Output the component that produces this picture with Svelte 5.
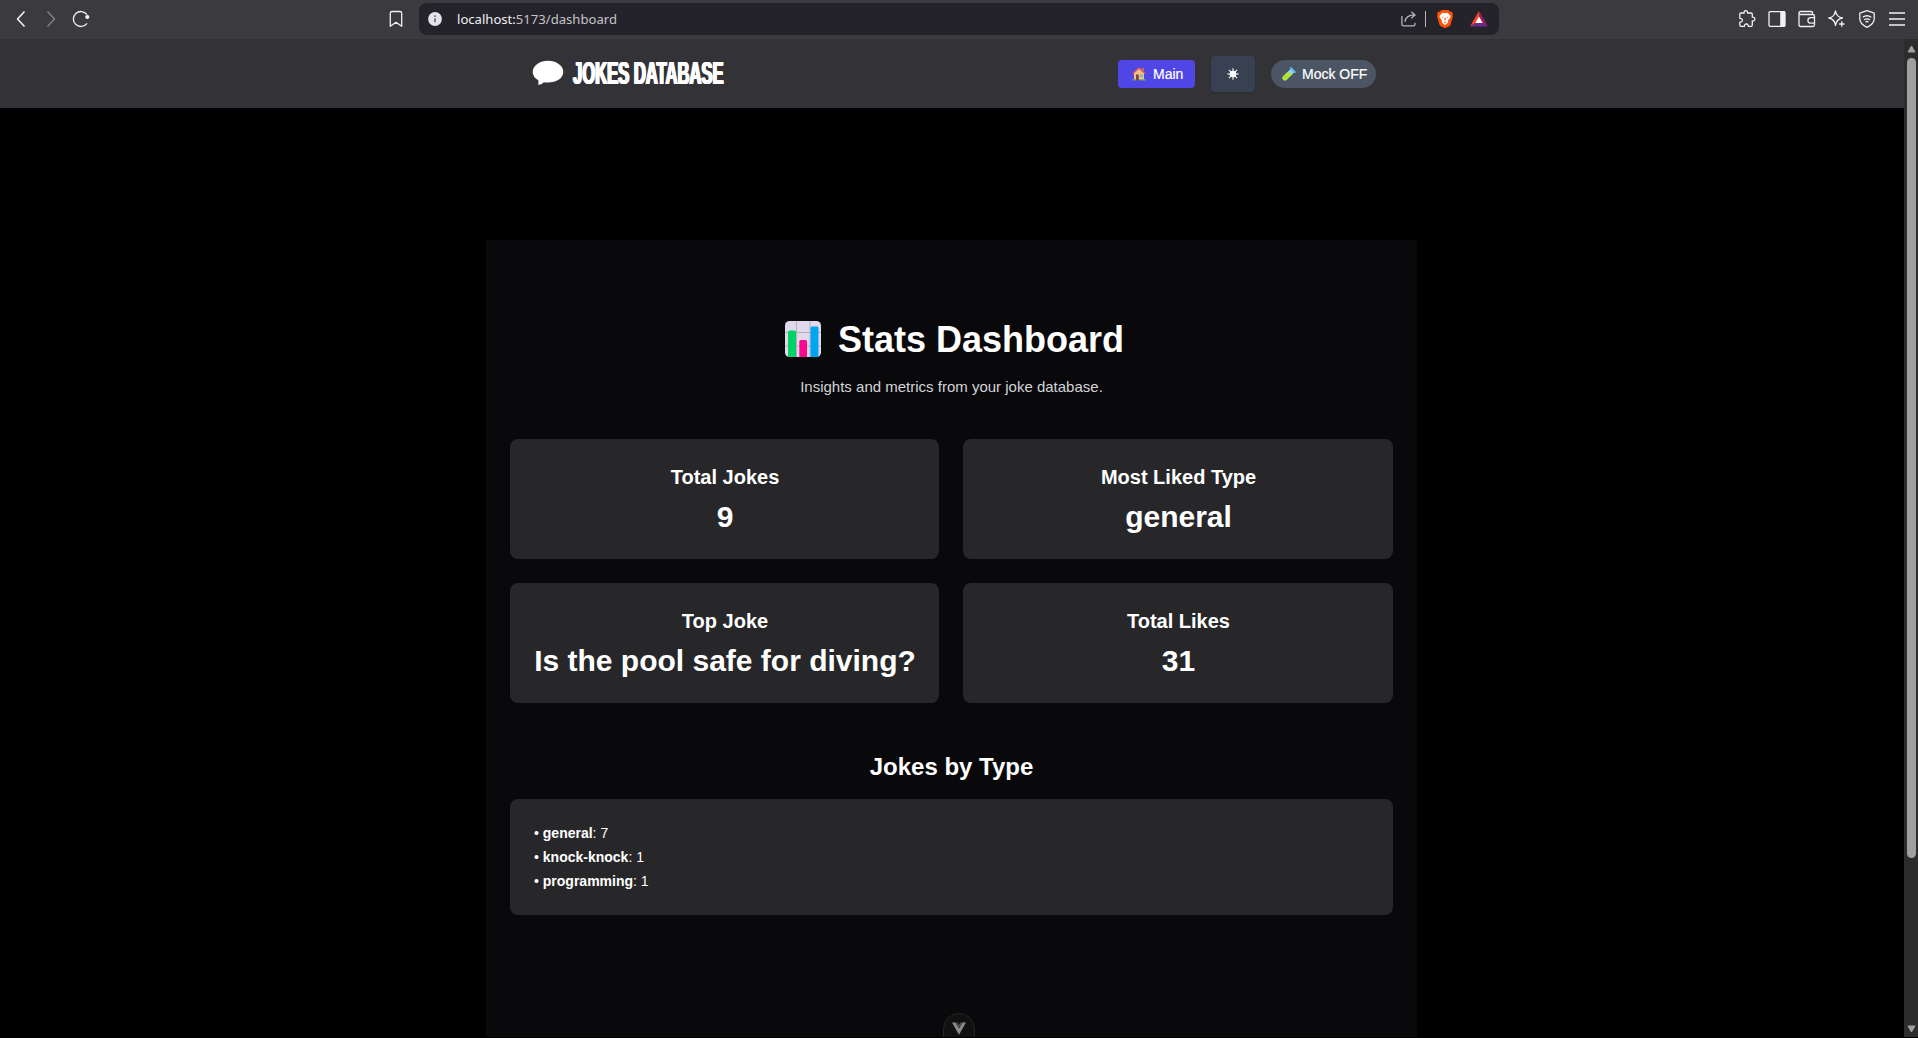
<script>
  const stats = [
    { label: 'Total Jokes', value: '9' },
    { label: 'Most Liked Type', value: 'general' },
    { label: 'Top Joke', value: 'Is the pool safe for diving?' },
    { label: 'Total Likes', value: '31' }
  ];
  const types = [
    { name: 'general', count: 7 },
    { name: 'knock-knock', count: 1 },
    { name: 'programming', count: 1 }
  ];
</script>

<div class="window">
  <div class="toolbar">
    <div class="nav-icons">
      <svg width="30" height="30" viewBox="0 0 30 30"><path d="M18.500 7.500 11.500 15l7 7.500" class="line thick" /></svg>
      <svg width="30" height="30" viewBox="0 0 30 30"><path d="m11.500 7.500 7 7.500-7 7.500" class="line dim" /></svg>
      <svg width="30" height="30" viewBox="0 0 30 30"><path d="M21 19.300A7.500 7.500 0 1 1 21 10.700" class="line" /><circle cx="21.300" cy="13" r="2.100" fill="#f1f0f4" /></svg>
    </div>
    <svg class="bookmark" width="20" height="20" viewBox="0 0 20 20"><path d="M4.300 4.300Q4.300 2.500 6 2.500h8q1.700 0 1.700 1.800v13L10 13.300l-5.700 4z" class="line" /></svg>
    <div class="address">
      <svg width="16" height="16" viewBox="0 0 16 16"><circle cx="8" cy="8" r="6.900" fill="#e4e3e9" /><path d="M8 7.300v4M8 4.300v1.600" stroke="#6a696e" stroke-width="1.600" /></svg>
      <span class="url"><b>localhost:</b>5173/dashboard</span>
      <div class="address-icons">
        <svg width="18" height="18" viewBox="0 0 18 18"><path d="M1.900 6v8.200q0 1.600 1.600 1.600h9.900q1.600 0 1.600-1.600v-1.400M5 11.800q.6-6.600 9.500-6.900M11.300 1.700l3.700 3.200-3.700 3.400" fill="none" stroke="#b5b4b9" stroke-width="1.300" /></svg>
        <i class="sep"></i>
        <svg class="brave" width="18" height="20" viewBox="0 0 18 20">
          <path d="M5.500 1h7l1.600 1.700 1.500-.2 1.400 2.300-.5 1.600.4 1-2.300 8.100q-.4 1-1.400 1.700L9 19.300l-4.200-2.100q-1-.7-1.400-1.700L1.100 7.400l.4-1L1 4.800l1.400-2.300 1.500.2z" fill="#fb5108" />
          <path d="M6.300 3.700 9 4.200l2.700-.5 2.900 3.200-.4 1.500-2.200 3.100.3 1.700L9 16.200l-3.300-3 .3-1.700-2.200-3.100-.4-1.500z" fill="#fff" />
          <path d="m5.200 7.700 2.100.4-.2.900zM12.800 7.700l-2.100.4.2.9zM8.600 8.500h.8l.3 2.600-.7.500-.7-.5zM7.300 13.200 9 12.700l1.700.5L9 14z" fill="#fb5108" />
        </svg>
        <svg class="bat" width="20" height="18" viewBox="0 0 20 18">
          <path d="M10 1 1 16.500 10 11z" fill="#ff4724" /><path d="m10 1 9 15.500L10 11z" fill="#9e1f63" /><path d="M1 16.500h18L10 11z" fill="#662d91" /><path d="m10 6.500 3.600 6.400H6.400z" fill="#fff" />
        </svg>
      </div>
    </div>
    <div class="tools">
      <svg width="20" height="20" viewBox="0 0 20 20"><path d="M2.800 5.200q0-1.200 1.200-1.200h3.200q-.4-2.300 1.600-2.300T10.500 4h3.600q1.200 0 1.200 1.200v3q2.500-.3 2.500 1.800t-2.500 1.900v4.200q0 1.200-1.200 1.200h-2.800q.2-2.300-1.900-2.300t-1.900 2.300H4q-1.200 0-1.200-1.200v-3q2.500.2 2.500-1.800T2.800 9.400z" class="line" /></svg>
      <svg width="20" height="20" viewBox="0 0 20 20"><rect x="2" y="2.700" width="16" height="14.600" rx="1" class="line" /><path d="M13.200 2.500H18v15h-4.800z" fill="#f1f0f4" /></svg>
      <svg width="20" height="20" viewBox="0 0 20 20"><path d="M15.500 5.500V3.700q0-1.200-1.200-1.200H3.600Q2 2.500 2 4t1.600 1.500h12.200q1.700 0 1.700 1.700v8.600q0 1.700-1.700 1.700H3.700Q2 17.500 2 15.800V4M17.500 8.700h-4.300a2.800 2.800 0 0 0 0 5.500h4.300" class="line" /></svg>
      <svg width="20" height="20" viewBox="0 0 20 20"><path d="M8.500 2q.9 6 7 7-6.100 1-7 7.300Q7.600 10 1.800 9 7.600 8 8.500 2zM14.800 12.300v5.400M12.100 15h5.400" class="line" /></svg>
      <svg width="20" height="20" viewBox="0 0 20 20"><path d="m10 1.700 7.200 2.500v5.600q0 5.200-7.200 8.500-7.200-3.300-7.200-8.500V4.200z" class="line" /><path d="M5.700 8.300Q10 5.200 14.300 8.300M7 10.800q3-2 6 0M8.500 13q1.500-1 3 0" class="line" /></svg>
      <svg width="20" height="20" viewBox="0 0 20 20"><path d="M2 4h16M2 10h16M2 16h16" class="line" /></svg>
    </div>
  </div>

  <div class="viewport">
    <div class="page">
      <header>
        <div class="brand">
          <svg width="32" height="26" viewBox="0 0 32 26"><path d="M16 .8C24 .8 31.300 5.500 31.300 11.800S25 22.600 15.500 22.600q-2 0-3.600-.3-2.200 2.500-6 2.500.9-1.800.4-4.600Q.7 17 .7 12C.7 5.500 8 .8 16 .8z" fill="#fff" /></svg>
          <div class="wordmark">JOKES DATABASE</div>
        </div>
        <nav>
          <button class="main">
            <svg width="14" height="14" viewBox="0 0 14 14"><path d="M9.800 1h2v3h-2z" fill="#b4786a" /><path d="M2 6 7 1.700 12 6v7H2z" fill="#f5c07d" /><path d="M.5 6.700 7 .9l6.500 5.800" fill="none" stroke="#e8505b" stroke-width="1.200" /><path d="M4 7.500h2.800V13H4z" fill="#7c4545" /><path d="M8.300 7.300h2.500v3H8.300z" fill="#62bdf5" /><path d="M0 12.900h4M7 12.900h7" stroke="#4fa878" stroke-width="1.200" /></svg>
            Main
          </button>
          <button class="theme" aria-label="Theme">
            <svg width="12" height="12" viewBox="0 0 12 12"><circle cx="6" cy="6" r="3.300" fill="#fff" /><path d="M6 .2v11.600M.2 6h11.600M1.900 1.900l8.200 8.200M10.100 1.900l-8.200 8.200" stroke="#fff" stroke-width="1.100" /></svg>
          </button>
          <button class="mock">
            <svg width="14" height="14" viewBox="0 0 14 14"><path d="m9 1.400 3.600 3.600-8.200 8Q2.800 14.200 1.200 12.800-.2 11.200 1 9.600z" fill="#8fd3f5" /><path d="m5 5.600 6 .8-6.600 6.600Q2.800 14.200 1.200 12.800-.2 11.200 1 9.600z" fill="#b4e635" /><path d="m8.800.9 4.300 4.300" stroke="#5cb8ef" stroke-width="1.700" stroke-linecap="round" /><circle cx="4" cy="10" r=".8" fill="#7fc11f" /></svg>
            Mock OFF
          </button>
        </nav>
      </header>

      <main>
        <h1>
          <svg width="36" height="36" viewBox="0 0 36 36">
            <rect width="36" height="36" rx="4.500" fill="#e1d8ec" />
            <path d="M11.500 0v36M25 0v36M0 11.500h36M0 25h36" stroke="#b4acbc" stroke-width="1" />
            <path d="M3 36V11q0-1.500 1.500-1.500h5Q11 9.500 11 11v25z" fill="#00d26a" />
            <path d="M14.300 36V20.500q0-1.500 1.500-1.500h4.700q1.500 0 1.500 1.500V36z" fill="#f70a8d" />
            <path d="M25.500 36V7q0-1.500 1.500-1.500h5q1.500 0 1.500 1.500v29z" fill="#00a6ed" />
          </svg>
          Stats Dashboard
        </h1>
        <p class="subtitle">Insights and metrics from your joke database.</p>
        <section class="cards">
          {#each stats as s}
            <div class="card">
              <h3>{s.label}</h3>
              <p>{s.value}</p>
            </div>
          {/each}
        </section>
        <h2>Jokes by Type</h2>
        <ul>
          {#each types as t}
            <li>• <strong>{t.name}</strong>: {t.count}</li>
          {/each}
        </ul>
      </main>
    </div>
    <div class="scrollbar">
      <svg width="9" height="8" viewBox="0 0 9 8"><path d="M4.500 1 8 7H1z" class="arrow" /></svg>
      <div class="thumb"></div>
      <svg class="down" width="9" height="8" viewBox="0 0 9 8"><path d="M4.500 7 8 1H1z" class="arrow" /></svg>
    </div>
  </div>
  <div class="devtools">
    <svg width="14" height="13" viewBox="0 0 14 13"><path d="M0 .5h3.500L7 6.500 10.500.5H14L7 12.700z" fill="#8b8b8b" /><path d="M3.500.5h2L7 3l1.500-2.500h2L7 6.500z" fill="#4c4c4c" /></svg>
  </div>
</div>

<style>
  :global(body) { background: #000; overflow: hidden; }
  * { box-sizing: border-box; margin: 0; padding: 0; }
  svg { display: block; flex: none; }
  .window {
    position: relative;
    width: 1918px;
    height: 1038px;
    overflow: hidden;
    display: flex;
    flex-direction: column;
    background: #000;
    border-bottom: 1px solid #000;
    color: #fff;
    font-family: "Liberation Sans", Arial, sans-serif;
  }
  .line { fill: none; stroke: #f1f0f4; stroke-width: 1.300; stroke-linejoin: round; }
  .thick { stroke-width: 1.600; }
  .dim { stroke: #858489; }

  .toolbar { flex: none; height: 39px; display: flex; align-items: center; background: #3b3a3f; padding: 0 0 1px 6px; }
  .nav-icons { display: flex; width: 380px; }
  .bookmark { margin-right: 13px; }
  .address { width: 1080px; height: 32px; border-radius: 8px; background: #242329; display: flex; align-items: center; padding-left: 8px; }
  .url { flex: 1; margin-left: 14px; font: 13.100px/20px "Noto Sans", sans-serif; color: #c4c3c9; }
  .url b { font-weight: 400; color: #f1f0f4; }
  .address-icons { display: flex; align-items: center; padding-right: 10px; }
  .sep { width: 1px; height: 16px; background: #b5b4b9; margin-left: 7px; }
  .brave { margin-left: 10px; }
  .bat { margin-left: 15px; }
  .tools { display: flex; gap: 10px; margin-left: 238px; }

  .viewport { flex: 1; min-height: 0; display: flex; }
  .page { flex: 1; min-width: 0; }
  header { height: 69px; background: #333237; padding: 0 528px 0 532px; display: flex; justify-content: space-between; align-items: center; }
  .brand { display: flex; gap: 9px; align-items: center; padding-bottom: 2px; }
  .wordmark {
    width: 151px;
    padding-top: 2px;
    font: 700 31px/28px "Liberation Sans", Arial, sans-serif;
    white-space: nowrap;
    text-shadow: 1.500px 0 #fff, -1.500px 0 #fff, 0.700px 0 #fff;
    transform: scaleX(0.535);
    transform-origin: left;
  }
  nav { display: flex; gap: 16px; align-items: center; }
  button { border: 0; color: #fff; font: 14px/20px "Liberation Sans", Arial, sans-serif; -webkit-text-stroke: 0.200px #fff; display: flex; align-items: center; height: 28px; gap: 7px; white-space: nowrap; }
  .main { width: 77px; padding-left: 14px; border-radius: 4px; background: #4f46e5; }
  .theme { width: 44px; height: 36px; justify-content: center; border-radius: 4px; background: #374151; box-shadow: 0 1px 2px #0003; }
  .mock { width: 105px; padding-left: 11px; gap: 6px; border-radius: 14px; background: #4b5563; }

  main { width: 931px; height: 800px; margin: 132px 0 0 486px; padding: 80px 24px 0; background: #09090b; }
  h1 { display: flex; justify-content: center; gap: 17px; font: 700 36px/40px "Liberation Sans", Arial, sans-serif; padding-left: 6px; }
  h1 svg { margin-top: 1px; }
  .subtitle { margin-top: 15px; text-align: center; font-size: 15px; line-height: 24px; color: #d4d4d8; }
  .cards { margin-top: 40px; display: grid; grid-template-columns: 429px 430px; gap: 24px; text-align: center; }
  .card { height: 120px; padding: 24px 0 24px 1px; border-radius: 8px; background: #27272a; }
  h3 { font-size: 20px; line-height: 28px; margin-bottom: 8px; }
  .card p { font-size: 30px; font-weight: 700; line-height: 36px; }
  h2 { margin: 48px 0 16px; font-size: 24px; line-height: 32px; text-align: center; }
  ul { list-style: none; height: 116px; padding: 22px 24px; border-radius: 8px; background: #27272a; font-size: 14px; line-height: 24px; }

  .scrollbar { width: 14px; background: #2c2c2c; display: flex; flex-direction: column; align-items: center; padding: 6px 0 4px; }
  .arrow { fill: #9f9f9f; stroke: #9f9f9f; stroke-width: 1; stroke-linejoin: round; }
  .thumb { width: 9px; height: 800px; margin-top: 5px; border-radius: 5px; background: #9f9f9f; }
  .down { margin-top: auto; }
  .devtools { position: absolute; left: 943px; top: 1013px; width: 32px; height: 40px; border: 1px solid #242424; border-radius: 16px; background: #111; display: flex; justify-content: center; padding-top: 8px; }
</style>
